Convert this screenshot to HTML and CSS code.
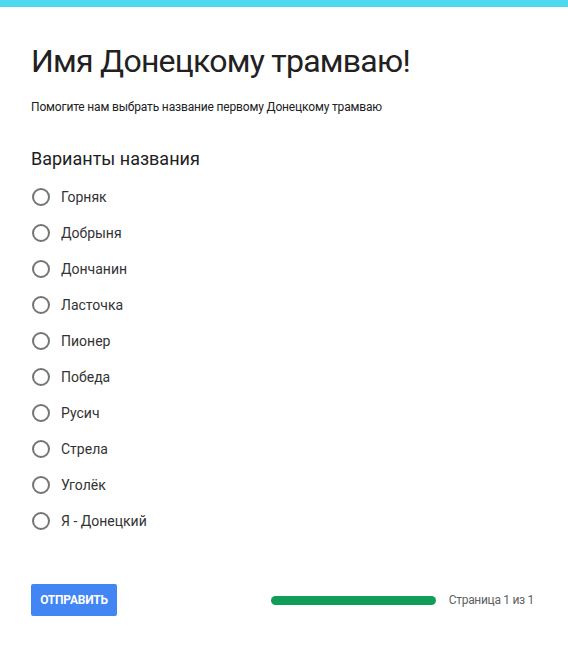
FILE: index.html
```html
<!DOCTYPE html>
<html lang="ru">
<head>
<meta charset="utf-8">
<link rel="stylesheet" href="styles.css">
</head>
<body>
<div class="topbar"></div>
<main class="form">
  <h1 class="title">Имя Донецкому трамваю!</h1>
  <p class="desc">Помогите нам выбрать название первому Донецкому трамваю</p>
  <h2 class="question">Варианты названия</h2>
  <ul class="options">
    <li class="option"><span class="radio"></span><span class="label">Горняк</span></li>
    <li class="option"><span class="radio"></span><span class="label">Добрыня</span></li>
    <li class="option"><span class="radio"></span><span class="label">Дончанин</span></li>
    <li class="option"><span class="radio"></span><span class="label">Ласточка</span></li>
    <li class="option"><span class="radio"></span><span class="label">Пионер</span></li>
    <li class="option"><span class="radio"></span><span class="label">Победа</span></li>
    <li class="option"><span class="radio"></span><span class="label">Русич</span></li>
    <li class="option"><span class="radio"></span><span class="label">Стрела</span></li>
    <li class="option"><span class="radio"></span><span class="label">Уголёк</span></li>
    <li class="option"><span class="radio"></span><span class="label">Я - Донецкий</span></li>
  </ul>
  <div class="footer">
    <button class="submit">ОТПРАВИТЬ</button>
    <div class="progress">
      <div class="bar"></div>
      <span class="page">Страница 1 из 1</span>
    </div>
  </div>
</main>
</body>
</html>
```
FILE: styles.css
```css
html, body { margin: 0; padding: 0; background: #fff; }
body { font-family: Roboto, "Noto Sans", Arial, sans-serif; color: #212121; }
.topbar { height: 7px; background: #4dd9ee; }
.form { padding: 0 34px 0 31px; }
.title { margin: 34px 0 0; font-size: 32px; font-weight: 400; line-height: 40px; letter-spacing: -0.75px; color: #212121; }
.desc { margin: 18px 0 0; font-size: 12px; line-height: 16px; letter-spacing: -0.16px; color: #212121; }
.question { margin: 32px 0 0; font-size: 18px; font-weight: 400; line-height: 24px; color: #212121; }
.options { list-style: none; margin: 8px 0 0; padding: 0; }
.option { display: flex; align-items: center; height: 36px; }
.radio { width: 14px; height: 14px; border: 2px solid #757575; border-radius: 50%; margin-left: 1px; margin-right: 11px; }
.label { font-size: 14px; color: #333; }
.footer { display: flex; align-items: center; justify-content: space-between; margin-top: 45px; }
.submit { background: #4285f4; color: #fff; border: none; border-radius: 2px; height: 32px; width: 86px; font-family: Roboto, Arial, sans-serif; font-weight: 700; font-size: 12px; padding: 0; letter-spacing: -0.2px; }
.progress { display: flex; align-items: center; gap: 13px; }
.bar { width: 165px; height: 9px; border-radius: 5px; background: #0f9d58; }
.page { font-size: 12px; color: #616161; letter-spacing: -0.3px; }
```
